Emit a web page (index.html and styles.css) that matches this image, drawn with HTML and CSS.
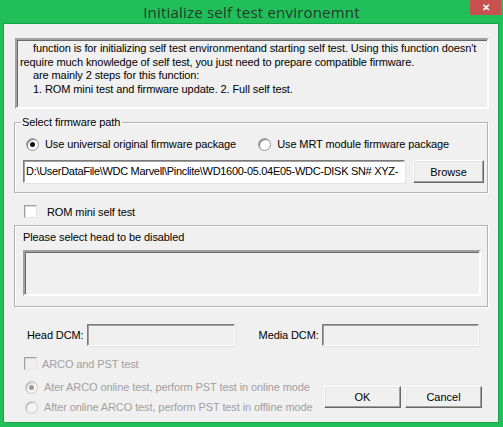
FILE: index.html
```html
<!DOCTYPE html>
<html lang="en">
<head>
    <meta charset="UTF-8">
    <meta name="viewport" content="width=device-width, initial-scale=1.0">
    <title>Initialize self test environemnt</title>
    <link rel="stylesheet" href="styles.css">
</head>
<body>
    <div class="window">
        <div class="titlebar">
            <span class="title">Initialize self test environemnt</span>
            <button class="close" title="Close">&#x2715;</button>
        </div>

        <div class="client">
            <div class="desc">
                <p class="indent">function is for initializing self test environmentand starting self test. Using this function doesn't</p>
                <p>require much knowledge of self test, you just need to prepare compatible firmware.</p>
                <p class="indent">are mainly 2 steps for this function:</p>
                <p class="indent">1. ROM mini test and firmware update. 2. Full self test.</p>
            </div>

            <fieldset class="group">
                <legend>Select firmware path</legend>
                <div class="radio-row">
                    <label class="opt"><span class="radio checked"></span>Use universal original firmware package</label>
                    <label class="opt opt-mrt"><span class="radio"></span>Use MRT module firmware package</label>
                </div>
                <div class="path-row">
                    <div class="textbox path">D:\UserDataFile\WDC Marvell\Pinclite\WD1600-05.04E05-WDC-DISK SN# XYZ-</div>
                    <button class="btn browse">Browse</button>
                </div>
            </fieldset>

            <label class="check-row"><span class="check"></span>ROM mini self test</label>

            <div class="group heads">
                <div class="heads-label">Please select head to be disabled</div>
                <div class="heads-list"></div>
            </div>

            <div class="dcm-row">
                <label class="dcm-label">Head DCM:</label>
                <div class="textbox dcm head-dcm"></div>
                <label class="dcm-label media-label">Media DCM:</label>
                <div class="textbox dcm media-dcm"></div>
            </div>

            <label class="check-row arco disabled"><span class="check"></span>ARCO and PST test</label>

            <div class="bottom">
                <div class="modes disabled">
                    <label class="opt"><span class="radio checked"></span>Ater ARCO online test, perform PST test in online mode</label>
                    <label class="opt"><span class="radio"></span>After online ARCO test, perform PST test in offline mode</label>
                </div>
                <div class="actions">
                    <button class="btn ok">OK</button>
                    <button class="btn cancel">Cancel</button>
                </div>
            </div>
        </div>
    </div>
</body>
</html>
```

FILE: styles.css
```css
body {
    margin: 0;
    padding: 0;
    background: #21bf59;
    font-family: "Liberation Sans", Arial, sans-serif;
    font-size: 11px;
    letter-spacing: -0.1px;
    color: #000;
    white-space: nowrap;
}

.window {
    width: 503px;
    height: 427px;
    display: flex;
    flex-direction: column;
}

.titlebar {
    height: 23px;
    display: flex;
    justify-content: center;
    align-items: center;
    position: relative;
}

.title {
    font-family: "Open Sans", "Noto Sans", sans-serif;
    font-size: 15px;
    color: #263a2c;
    letter-spacing: 0.2px;
    margin-top: 1px;
}

.close {
    position: absolute;
    top: 0;
    right: 2px;
    width: 31px;
    height: 15px;
    padding: 0;
    border: none;
    background: #c75050;
    color: #fff;
    font-size: 10px;
    font-weight: bold;
    line-height: 15px;
}

.client {
    flex: 1;
    margin: 0 4px 4px 3px;
    padding: 14px 10px 0 10px;
    background: #f0f0f0;
    border: 1px solid #1aa24b;
}

/* description box */
.desc {
    height: 65px;
    margin: 0 -1px 0 1px;
    padding: 2px 4px 0 3px;
    background: #f0f0f0;
    border: 2px solid;
    border-color: #a0a0a0 #ffffff #ffffff #a0a0a0;
    box-shadow: inset 1px 1px 0 #696969;
    line-height: 13.5px;
}

.desc p {
    margin: 0;
}

.desc .indent {
    padding-left: 13px;
}

/* group boxes */
.group {
    margin: 0;
    border: 1px solid #b2b2b2;
    box-shadow: inset 1px 1px 0 #fff, 1px 1px 0 #fff;
}

fieldset.group {
    margin-top: 7px;
    padding: 0 3px 9px 8px;
    min-width: 0;
}

.group legend {
    padding: 0 2px 0 1px;
    margin-left: -2px;
    line-height: 13px;
}

.radio-row {
    display: flex;
    margin-top: 8px;
    height: 14px;
    align-items: center;
}

.opt {
    display: flex;
    align-items: center;
    height: 14px;
}

.opt-mrt {
    margin-left: 19px;
}

.radio {
    width: 11px;
    height: 11px;
    margin: 0 6px 0 3px;
    border-radius: 50%;
    background: radial-gradient(circle, #fff 55%, #e4e4e4 100%);
    border: 1px solid #9a9a9a;
    box-shadow: inset 1px 1px 0 #7b7b7b;
    display: flex;
    align-items: center;
    justify-content: center;
}

.radio.checked::after {
    content: "";
    width: 5px;
    height: 5px;
    border-radius: 50%;
    background: #111;
}

.path-row {
    display: flex;
    margin-top: 9px;
    gap: 8px;
}

.textbox {
    box-sizing: border-box;
    border: 1px solid;
    border-color: #7a7a7a #ffffff #ffffff #7a7a7a;
    box-shadow: inset 1px 1px 0 #a0a0a0, 1px 1px 0 #e3e3e3;
}

.path {
    width: 382px;
    height: 23px;
    background: #fff;
    padding: 4px 0 0 2px;
    letter-spacing: -0.3px;
    overflow: hidden;
}

.btn {
    box-sizing: border-box;
    height: 23px;
    padding: 0;
    font-family: "Liberation Sans", Arial, sans-serif;
    font-size: 11px;
    color: #000;
    background: #f0f0f0;
    border: 1px solid;
    border-color: #ffffff #696969 #696969 #ffffff;
    box-shadow: inset -1px -1px 0 #a0a0a0, inset 1px 1px 0 #e3e3e3;
}

.browse {
    width: 71px;
}

/* checkboxes */
.check-row {
    display: flex;
    align-items: center;
    height: 13px;
    margin: 12px 0 0 10px;
}

.check {
    box-sizing: border-box;
    width: 13px;
    height: 13px;
    margin-right: 10px;
    background: #fff;
    border: 1px solid;
    border-color: #a0a0a0 #e3e3e3 #e3e3e3 #a0a0a0;
    box-shadow: inset 1px 1px 0 #dcdcdc;
}

.check-row.arco {
    margin-top: 11px;
}

.arco .check {
    background: #f0f0f0;
    margin-right: 5px;
}

.disabled {
    color: #a0a0a0;
}

/* head select group */
.heads {
    margin-top: 7px;
    padding: 5px 6px 10px 8px;
}

.heads-label {
    line-height: 13px;
}

.heads-list {
    box-sizing: border-box;
    height: 46px;
    margin-top: 6px;
    background: #f0f0f0;
    border: 2px solid;
    border-color: #a0a0a0 #ffffff #ffffff #a0a0a0;
    box-shadow: inset 1px 1px 0 #696969;
}

/* DCM fields */
.dcm-row {
    display: flex;
    align-items: center;
    margin-top: 17px;
    padding-left: 13px;
}

.dcm-label {
    margin-right: 3px;
}

.dcm {
    height: 22px;
    background: #f0f0f0;
}

.head-dcm {
    width: 148px;
}

.media-label {
    margin-left: 24px;
}

.media-dcm {
    width: 157px;
}

/* bottom area */
.bottom {
    display: flex;
    justify-content: space-between;
    margin-top: 10px;
}

.modes {
    display: flex;
    flex-direction: column;
    gap: 6px;
    padding-left: 8px;
}

.modes .radio {
    margin: 0 6px 0 3px;
    background: #f4f4f4;
    border-color: #c8c8c8;
    box-shadow: inset 1px 1px 0 #b8b8b8;
}

.modes .radio.checked::after {
    background: #9a9a9a;
}

.actions {
    display: flex;
    gap: 4px;
    margin-top: 6px;
    padding-right: 6px;
}

.ok {
    width: 77px;
    height: 22px;
}

.cancel {
    width: 77px;
    height: 22px;
}
```
